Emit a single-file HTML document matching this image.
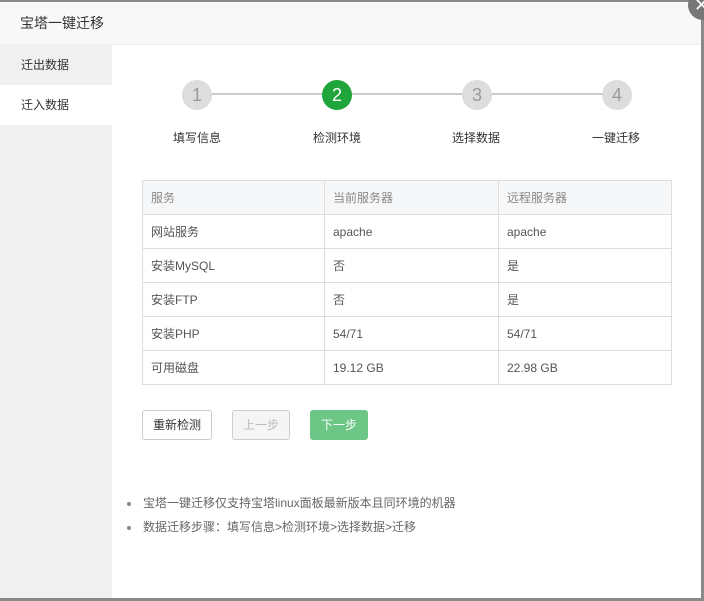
<!DOCTYPE html>
<html><head><meta charset="utf-8"><style>
*{margin:0;padding:0;box-sizing:border-box}
body{width:704px;height:601px;overflow:hidden;background:#fff;font-family:"Liberation Sans","Noto Sans CJK SC",sans-serif;font-size:12px;color:#555;position:relative}
.frame{position:absolute;left:0;top:0;width:704px;height:601px;border-top:2px solid #8a8a8a;border-right:3px solid #8a8a8a;border-bottom:3px solid #8a8a8a}
.title{position:absolute;left:0;top:2px;width:701px;height:43px;background:#f8f8f8;border-bottom:1px solid #eee;font-size:14px;color:#333;line-height:43px;padding-left:20px}
.side{position:absolute;left:0;top:45px;width:112px;height:553px;background:#f0f0f0}
.side div{height:40px;line-height:40px;padding-left:21px;font-size:12px;color:#333}
.side .on{background:#fff}
.close{position:absolute;left:688px;top:-10px;width:30px;height:30px;border-radius:50%;background:#777;color:#fff;font-size:18px;line-height:30px;text-indent:6px}
.line{position:absolute;left:197px;top:93px;width:420px;height:2px;background:#ccc}
.c{position:absolute;top:80px;width:30px;height:30px;border-radius:50%;background:#ddd;color:#999;font-size:18px;text-align:center;line-height:30px}
.c.g{background:#20a53a;color:#fff}
.l{position:absolute;top:129px;width:100px;text-align:center;color:#333;font-size:12px}
table{position:absolute;left:142px;top:180px;width:530px;border-collapse:collapse}
td{border:1px solid #ddd;height:34px;padding-left:8px;color:#555}
tr:first-child td{background:#f6f7f9;color:#888}
.b{position:absolute;top:410px;height:30px;border-radius:3px;text-align:center;line-height:28px;font-size:12px}
ul{position:absolute;left:143px;top:494px;list-style:none;color:#666}
li{height:24px;line-height:18px;position:relative}
li:before{content:"";position:absolute;left:-16px;top:8px;width:4px;height:4px;border-radius:50%;background:#888}
</style></head><body>
<div class="title">宝塔一键迁移</div>
<div class="side"><div>迁出数据</div><div class="on">迁入数据</div></div>
<div class="line"></div>
<div class="c" style="left:182px">1</div>
<div class="c g" style="left:322px">2</div>
<div class="c" style="left:462px">3</div>
<div class="c" style="left:602px">4</div>
<div class="l" style="left:147px">填写信息</div>
<div class="l" style="left:287px">检测环境</div>
<div class="l" style="left:426px">选择数据</div>
<div class="l" style="left:566px">一键迁移</div>
<table>
<tr><td style="width:182px">服务</td><td style="width:174px">当前服务器</td><td>远程服务器</td></tr>
<tr><td>网站服务</td><td>apache</td><td>apache</td></tr>
<tr><td>安装MySQL</td><td>否</td><td>是</td></tr>
<tr><td>安装FTP</td><td>否</td><td>是</td></tr>
<tr><td>安装PHP</td><td>54/71</td><td>54/71</td></tr>
<tr><td>可用磁盘</td><td>19.12 GB</td><td>22.98 GB</td></tr>
</table>
<div class="b" style="left:142px;width:70px;border:1px solid #ccc;color:#333">重新检测</div>
<div class="b" style="left:232px;width:58px;border:1px solid #ccc;background:#f5f5f5;color:#bbb">上一步</div>
<div class="b" style="left:310px;width:58px;border:1px solid #6cc685;background:#6cc685;color:#fff">下一步</div>
<ul><li>宝塔一键迁移仅支持宝塔linux面板最新版本且同环境的机器</li><li>数据迁移步骤：填写信息&gt;检测环境&gt;选择数据&gt;迁移</li></ul>
<div class="frame"></div>
<div class="close">✕</div>
</body></html>
